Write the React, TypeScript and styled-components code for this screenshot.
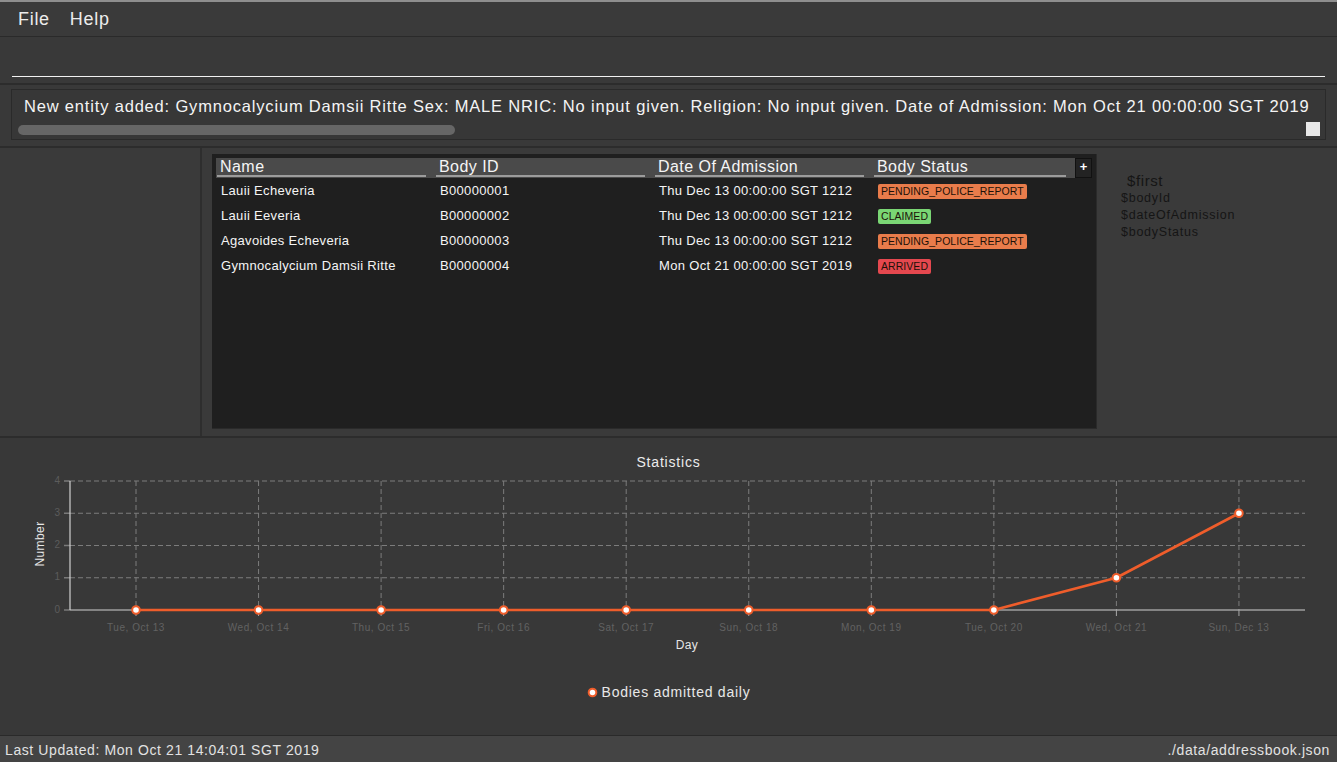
import React from "react";
import styled, { createGlobalStyle } from "styled-components";

const Global = createGlobalStyle`
  html, body { margin: 0; padding: 0; background: #393939; }
  body { font-family: "Liberation Sans", Arial, sans-serif; overflow: hidden; }
  * { box-sizing: border-box; }
`;

const Window = styled.div`
  width: 1337px;
  height: 762px;
  display: flex;
  flex-direction: column;
  background: #393939;
  border-top: 2px solid #8e8e8e;
  overflow: hidden;
`;

const MenuBar = styled.div`
  height: 35px;
  display: flex;
  align-items: center;
  gap: 20px;
  padding-left: 18px;
  background: #3a3a3a;
  border-bottom: 1px solid #2a2a2a;
  color: #ececec;
  font-size: 18px;
  letter-spacing: 0.7px;
`;

const CommandArea = styled.div`
  height: 48px;
  padding: 0 12px;
  border-bottom: 2px solid #2c2c2c;
  background: #393939;
`;

const CommandInput = styled.div`
  height: 40px;
  border-bottom: 1.5px solid #f2f2f2;
`;

const ResultArea = styled.div`
  height: 63px;
  padding: 4px 11px 6px 11px;
  border-bottom: 2px solid #2c2c2c;
`;

const ResultBox = styled.div`
  height: 51px;
  border: 1px solid #2a2a2a;
  background: #373737;
  display: flex;
  flex-direction: column;
  overflow: hidden;
`;

const ResultText = styled.div`
  padding: 7px 0 0 12px;
  height: 30px;
  font-size: 16.5px;
  line-height: 18px;
  letter-spacing: 0.82px;
  color: #f4f4f4;
  white-space: nowrap;
  overflow: hidden;
  width: 1297px;
`;

const ScrollRow = styled.div`
  display: flex;
  align-items: flex-start;
  justify-content: space-between;
  padding: 0 5px 0 6px;
`;

const Thumb = styled.div`
  width: 437px;
  height: 10px;
  margin-top: 5px;
  border-radius: 5px;
  background: #666666;
`;

const Corner = styled.div`
  width: 14px;
  height: 14px;
  margin-top: 2px;
  background: #e8e8e8;
`;

const Middle = styled.div`
  height: 290px;
  display: flex;
  border-bottom: 2px solid #2c2c2c;
  background: #3a3a3a;
`;

const LeftPanel = styled.div`
  width: 202px;
  border-right: 2px solid #2e2e2e;
`;

const ListPanel = styled.div`
  width: 902px;
  padding: 6px 7px 7px 10px;
`;

const Table = styled.div`
  height: 275px;
  background: #1f1f1f;
  padding: 4px 4px 0 4px;
  border-right: 1px solid #2a2a2a;
  border-bottom: 1px solid #2a2a2a;
`;

const HeaderRow = styled.div`
  display: grid;
  grid-template-columns: 219px 219px 219px 202px 17px;
  height: 20px;
  background: #4a4a4a;
`;

const HeaderCell = styled.div`
  display: flex;
  flex-direction: column;
  justify-content: flex-end;
`;

const HeaderLabel = styled.div`
  padding-left: 4px;
  font-size: 16px;
  line-height: 16px;
  letter-spacing: 0.45px;
  color: #f5f5f5;
`;

const HeaderRule = styled.div`
  height: 2px;
  margin: 0 9px 1px 1px;
  background: #9c9c9c;
`;

const PlusButton = styled.div`
  background: #232323;
  border: 1px solid #111;
  color: #ffffff;
  font-weight: bold;
  font-size: 13px;
  line-height: 12px;
  display: flex;
  justify-content: center;
  padding-top: 2px;
`;

const Row = styled.div`
  display: grid;
  grid-template-columns: 219px 219px 219px 219px;
  height: 25px;
  align-items: center;
`;

const Cell = styled.div`
  padding-left: 5px;
  font-size: 13px;
  letter-spacing: 0.33px;
  color: #f5f5f5;
  white-space: nowrap;
`;

const Badge = styled.span<{ $bg: string }>`
  display: inline-block;
  padding: 0 3px;
  height: 15px;
  line-height: 15px;
  border-radius: 2px;
  font-size: 10.5px;
  letter-spacing: 0.05px;
  color: #1c1208;
  background: ${(p) => p.$bg};
`;

const RightPanel = styled.div`
  flex: 1;
  padding: 24px 0 0 17px;
  color: #151515;
`;

const CardTitle = styled.div`
  font-size: 15px;
  line-height: 18px;
  padding-left: 6px;
  letter-spacing: 0.6px;
`;

const CardLine = styled.div`
  font-size: 12.5px;
  line-height: 17px;
  letter-spacing: 0.75px;
`;

const ChartPanel = styled.div`
  height: 298px;
  display: flex;
  flex-direction: column;
  align-items: center;
  padding-top: 16px;
  border-bottom: 1px solid #2a2a2a;
  background: #383838;
`;

const ChartTitle = styled.div`
  font-size: 14px;
  line-height: 16px;
  letter-spacing: 0.8px;
  color: #ececec;
`;

const Legend = styled.div`
  margin-top: 24px;
  display: flex;
  align-items: center;
  gap: 4px;
  font-size: 14px;
  line-height: 16px;
  letter-spacing: 0.75px;
  color: #e8e8e8;
`;

const StatusBar = styled.div`
  flex: 1;
  display: flex;
  align-items: center;
  justify-content: space-between;
  padding: 2px 7px 0 5px;
  background: #444444;
  color: #e2e2e2;
  font-size: 14px;
  letter-spacing: 0.6px;
`;

const ORANGE = "#ef5d2b";

const rows = [
  { name: "Lauii Echeveria", id: "B00000001", date: "Thu Dec 13 00:00:00 SGT 1212", status: "PENDING_POLICE_REPORT", color: "#e97c4b" },
  { name: "Lauii Eeveria", id: "B00000002", date: "Thu Dec 13 00:00:00 SGT 1212", status: "CLAIMED", color: "#7ad674" },
  { name: "Agavoides Echeveria", id: "B00000003", date: "Thu Dec 13 00:00:00 SGT 1212", status: "PENDING_POLICE_REPORT", color: "#e97c4b" },
  { name: "Gymnocalycium Damsii Ritte", id: "B00000004", date: "Mon Oct 21 00:00:00 SGT 2019", status: "ARRIVED", color: "#e5484f" },
];

const days = [
  "Tue, Oct 13", "Wed, Oct 14", "Thu, Oct 15", "Fri, Oct 16", "Sat, Oct 17",
  "Sun, Oct 18", "Mon, Oct 19", "Tue, Oct 20", "Wed, Oct 21", "Sun, Dec 13",
];
const values = [0, 0, 0, 0, 0, 0, 0, 0, 1, 3];

const X0 = 70;
const X1 = 1305;
const YTOP = 11;
const YBOT = 140;
const xAt = (i: number) => 136 + i * 122.55;
const yAt = (v: number) => YBOT - (v * (YBOT - YTOP)) / 4;
const FONT = "Liberation Sans, Arial, sans-serif";

function Chart() {
  const pts = values.map((v, i) => `${xAt(i)},${yAt(v)}`).join(" ");
  return (
    <svg width={1337} height={190} style={{ display: "block" }}>
      {[1, 2, 3, 4].map((v) => (
        <line key={"h" + v} x1={X0} x2={X1} y1={yAt(v)} y2={yAt(v)} stroke="#7c7c7c" strokeDasharray="5 3" />
      ))}
      {days.map((_, i) => (
        <line key={"v" + i} x1={xAt(i)} x2={xAt(i)} y1={YTOP} y2={YBOT} stroke="#7c7c7c" strokeDasharray="5 3" />
      ))}
      {[0, 1, 2, 3, 4].map((v) => (
        <g key={"yt" + v}>
          <line x1={64} x2={X0} y1={yAt(v)} y2={yAt(v)} stroke="#7a7a7a" strokeWidth={1.5} />
          <text x={60} y={yAt(v)} fontSize={10} fill="#5c5c5c" textAnchor="end" dominantBaseline="middle" fontFamily={FONT}>
            {v}
          </text>
        </g>
      ))}
      <line x1={X0} x2={X0} y1={YTOP} y2={YBOT} stroke="#d0d0d0" strokeWidth={1.2} />
      <line x1={X0} x2={X1} y1={YBOT} y2={YBOT} stroke="#d0d0d0" strokeWidth={1.2} />
      {days.map((d, i) => (
        <g key={"xt" + i}>
          <line x1={xAt(i)} x2={xAt(i)} y1={YBOT} y2={YBOT + 6} stroke="#a8a8a8" />
          <text x={xAt(i)} y={158} fontSize={10} fill="#626262" textAnchor="middle" dominantBaseline="middle" letterSpacing={0.55} fontFamily={FONT}>
            {d}
          </text>
        </g>
      ))}
      <text x={687} y={176} fontSize={12} fill="#e6e6e6" textAnchor="middle" dominantBaseline="middle" letterSpacing={0.4} fontFamily={FONT}>
        Day
      </text>
      <text x={41} y={74} fontSize={12} fill="#e6e6e6" textAnchor="middle" dominantBaseline="middle" letterSpacing={0.4} transform="rotate(-90 41 74)" fontFamily={FONT}>
        Number
      </text>
      <polyline points={pts} fill="none" stroke={ORANGE} strokeWidth={2.6} strokeLinejoin="round" />
      {values.map((v, i) => (
        <circle key={"m" + i} cx={xAt(i)} cy={yAt(v)} r={3.8} fill="#ffffff" stroke={ORANGE} strokeWidth={2} />
      ))}
    </svg>
  );
}

function LegendDot() {
  return (
    <svg width={11} height={11} viewBox="0 0 11 11">
      <circle cx={5.5} cy={5.5} r={3.8} fill="#ffffff" stroke={ORANGE} strokeWidth={2} />
    </svg>
  );
}

export default function App() {
  return (
    <>
      <Global />
      <Window>
        <MenuBar>
          <span>File</span>
          <span>Help</span>
        </MenuBar>
        <CommandArea>
          <CommandInput />
        </CommandArea>
        <ResultArea>
          <ResultBox>
            <ResultText>
              New entity added: Gymnocalycium Damsii Ritte Sex: MALE NRIC: No input given. Religion: No input given. Date of Admission: Mon Oct 21 00:00:00 SGT 2019
            </ResultText>
            <ScrollRow>
              <Thumb />
              <Corner />
            </ScrollRow>
          </ResultBox>
        </ResultArea>
        <Middle>
          <LeftPanel />
          <ListPanel>
            <Table>
              <HeaderRow>
                {["Name", "Body ID", "Date Of Admission", "Body Status"].map((h) => (
                  <HeaderCell key={h}>
                    <HeaderLabel>{h}</HeaderLabel>
                    <HeaderRule />
                  </HeaderCell>
                ))}
                <PlusButton>+</PlusButton>
              </HeaderRow>
              {rows.map((r) => (
                <Row key={r.id}>
                  <Cell>{r.name}</Cell>
                  <Cell>{r.id}</Cell>
                  <Cell>{r.date}</Cell>
                  <Cell>
                    <Badge $bg={r.color}>{r.status}</Badge>
                  </Cell>
                </Row>
              ))}
            </Table>
          </ListPanel>
          <RightPanel>
            <CardTitle>$first</CardTitle>
            <CardLine>$bodyId</CardLine>
            <CardLine>$dateOfAdmission</CardLine>
            <CardLine>$bodyStatus</CardLine>
          </RightPanel>
        </Middle>
        <ChartPanel>
          <ChartTitle>Statistics</ChartTitle>
          <Chart />
          <Legend>
            <LegendDot />
            <span>Bodies admitted daily</span>
          </Legend>
        </ChartPanel>
        <StatusBar>
          <span>Last Updated: Mon Oct 21 14:04:01 SGT 2019</span>
          <span>./data/addressbook.json</span>
        </StatusBar>
      </Window>
    </>
  );
}
